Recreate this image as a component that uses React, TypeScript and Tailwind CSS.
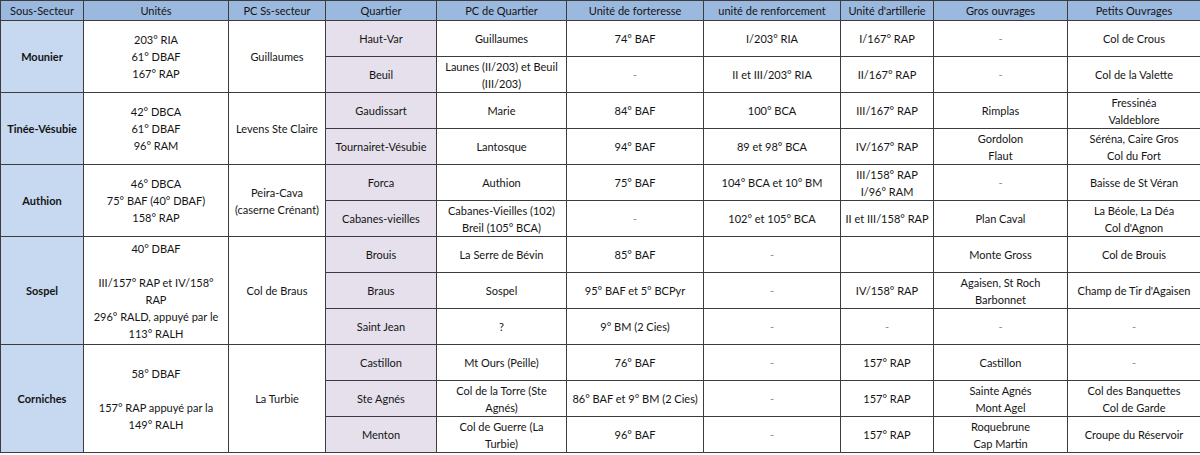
import React from "react";

type Cell = string | string[];

type Group = {
  name: string;
  units: string[];
  pc: string[];
  rows: Cell[][];
};

const headers = [
  "Sous-Secteur",
  "Unités",
  "PC Ss-secteur",
  "Quartier",
  "PC de Quartier",
  "Unité de forteresse",
  "unité de renforcement",
  "Unité d'artillerie",
  "Gros ouvrages",
  "Petits Ouvrages",
];

const widths = [83, 145, 97, 111, 130, 137, 137, 93, 134, 133];

const groups: Group[] = [
  {
    name: "Mounier",
    units: ["203° RIA", "61° DBAF", "167° RAP"],
    pc: ["Guillaumes"],
    rows: [
      ["Haut-Var", "Guillaumes", "74° BAF", "I/203° RIA", "I/167° RAP", "-", "Col de Crous"],
      ["Beuil", ["Launes (II/203) et Beuil", "(III/203)"], "-", "II et III/203° RIA", "II/167° RAP", "-", "Col de la Valette"],
    ],
  },
  {
    name: "Tinée-Vésubie",
    units: ["42° DBCA", "61° DBAF", "96° RAM"],
    pc: ["Levens Ste Claire"],
    rows: [
      ["Gaudissart", "Marie", "84° BAF", "100° BCA", "III/167° RAP", "Rimplas", ["Fressinéa", "Valdeblore"]],
      ["Tournairet-Vésubie", "Lantosque", "94° BAF", "89 et 98° BCA", "IV/167° RAP", ["Gordolon", "Flaut"], ["Séréna, Caire Gros", "Col du Fort"]],
    ],
  },
  {
    name: "Authion",
    units: ["46° DBCA", "75° BAF (40° DBAF)", "158° RAP"],
    pc: ["Peira-Cava", "(caserne Crénant)"],
    rows: [
      ["Forca", "Authion", "75° BAF", "104° BCA et 10° BM", ["III/158° RAP", "I/96° RAM"], "-", "Baisse de St Véran"],
      ["Cabanes-vieilles", ["Cabanes-Vieilles (102)", "Breil (105° BCA)"], "-", "102° et 105° BCA", "II et III/158° RAP", "Plan Caval", ["La Béole, La Déa", "Col d'Agnon"]],
    ],
  },
  {
    name: "Sospel",
    units: ["40° DBAF", "", "III/157° RAP et IV/158°", "RAP", "296° RALD, appuyé par le", "113° RALH"],
    pc: ["Col de Braus"],
    rows: [
      ["Brouis", "La Serre de Bévin", "85° BAF", "-", "", "Monte Gross", "Col de Brouis"],
      ["Braus", "Sospel", "95° BAF et 5° BCPyr", "-", "IV/158° RAP", ["Agaisen, St Roch", "Barbonnet"], "Champ de Tir d'Agaisen"],
      ["Saint Jean", "?", "9° BM (2 Cies)", "-", "-", "-", "-"],
    ],
  },
  {
    name: "Corniches",
    units: ["58° DBAF", "", "157° RAP appuyé par la", "149° RALH"],
    pc: ["La Turbie"],
    rows: [
      ["Castillon", "Mt Ours (Peille)", "76° BAF", "-", "157° RAP", "Castillon", "-"],
      ["Ste Agnés", ["Col de la Torre (Ste", "Agnés)"], ["86° BAF et 9° BM (2 Cies)"], "-", "157° RAP", ["Sainte Agnés", "Mont Agel"], ["Col des Banquettes", "Col de Garde"]],
      ["Menton", ["Col de Guerre (La", "Turbie)"], "96° BAF", "-", "157° RAP", ["Roquebrune", "Cap Martin"], "Croupe du Réservoir"],
    ],
  },
];

function Lines({ value }: { value: Cell }) {
  const lines = Array.isArray(value) ? value : [value];
  return (
    <>
      {lines.map((l, i) => (
        <div key={i} className={l === "-" ? "text-[#8a8a8a]" : ""}>
          {l === "" ? "\u00a0" : l}
        </div>
      ))}
    </>
  );
}

const td = "border border-[#3c3c3c] text-center align-middle px-1 leading-[17px]";

export default function App() {
  return (
    <div className="w-[1200px] h-[455px] bg-white overflow-hidden" style={{ fontFamily: "Lato, 'Open Sans', sans-serif" }}>
      <table className="table-fixed border-collapse w-[1200px] text-[11px] text-[#141414]">
        <colgroup>
          {widths.map((w, i) => (
            <col key={i} style={{ width: w }} />
          ))}
        </colgroup>
        <thead>
          <tr className="h-[20px] bg-[#9bb9df]">
            {headers.map((h) => (
              <th key={h} className="border border-[#3c3c3c] font-normal text-center leading-[16px] whitespace-nowrap">
                {h}
              </th>
            ))}
          </tr>
        </thead>
        <tbody>
          {groups.map((g) =>
            g.rows.map((r, ri) => (
              <tr key={g.name + ri} className="h-[36px]">
                {ri === 0 && (
                  <>
                    <td rowSpan={g.rows.length} className={`${td} bg-[#c6d9f1] font-bold`}>
                      {g.name}
                    </td>
                    <td rowSpan={g.rows.length} className={td}>
                      <Lines value={g.units} />
                    </td>
                    <td rowSpan={g.rows.length} className={td}>
                      <Lines value={g.pc} />
                    </td>
                  </>
                )}
                {r.map((c, ci) => (
                  <td
                    key={ci}
                    className={`${td} whitespace-nowrap ${ci === 0 ? "bg-[#e5e0ec]" : "bg-white"}`}
                  >
                    <Lines value={c} />
                  </td>
                ))}
              </tr>
            ))
          )}
        </tbody>
      </table>
    </div>
  );
}
